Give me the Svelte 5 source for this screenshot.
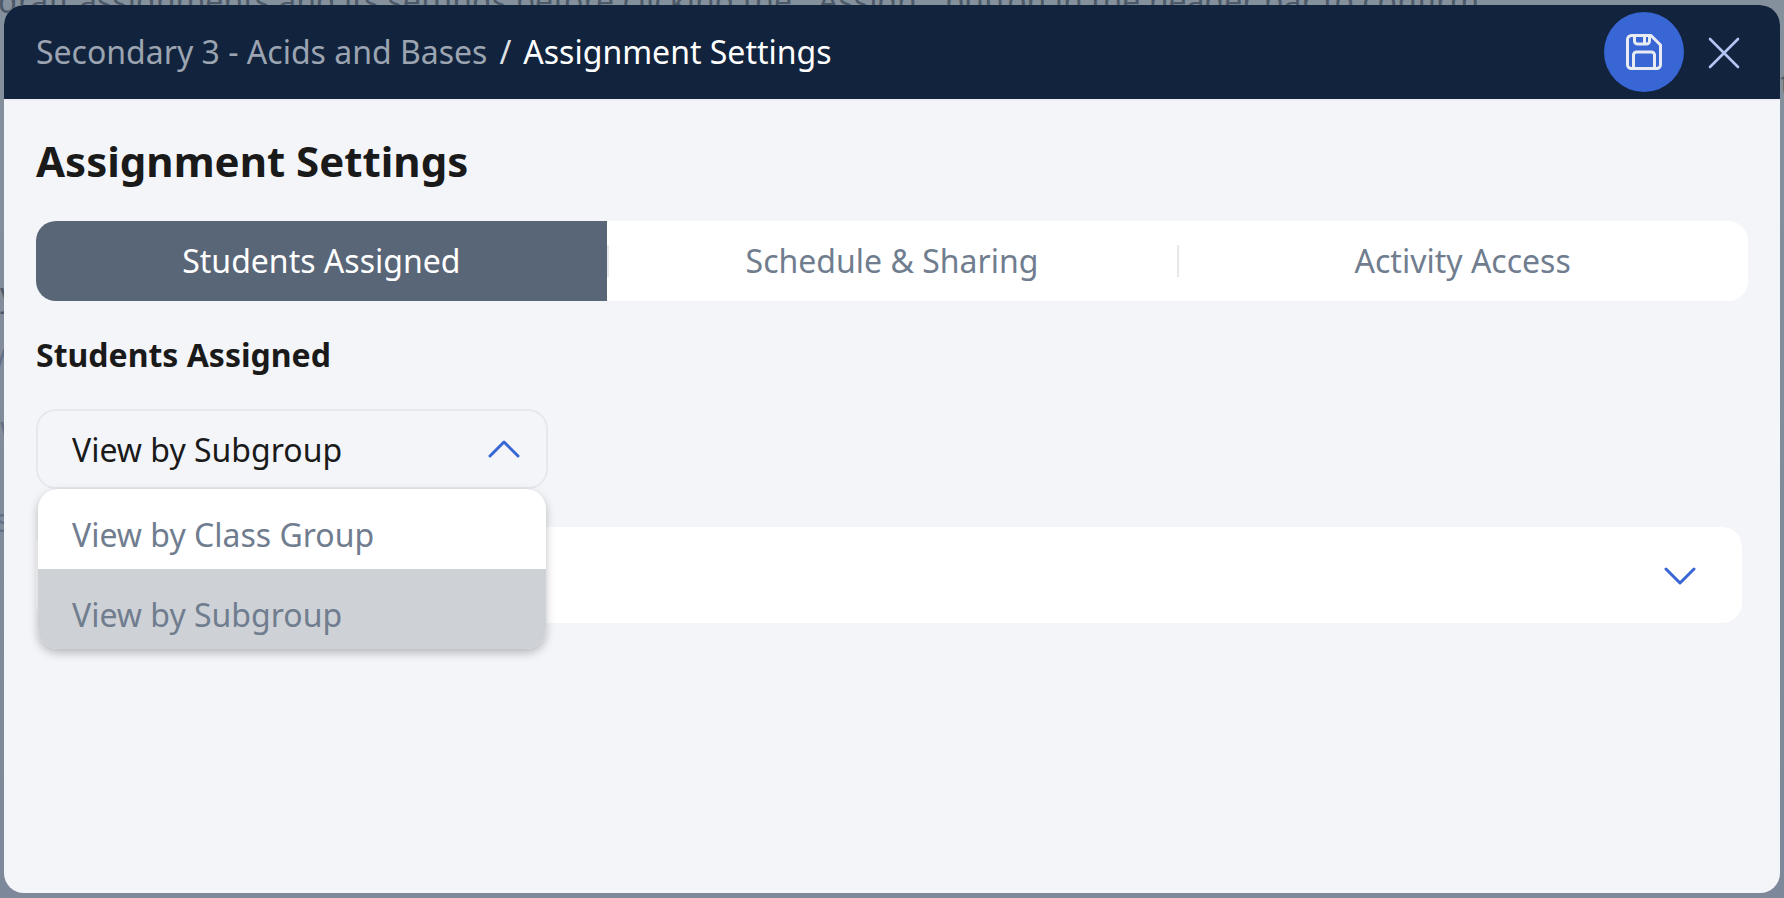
<script>
  const tabs = ['Students Assigned', 'Schedule & Sharing', 'Activity Access'];
  const views = ['View by Class Group', 'View by Subgroup'];

  let activeTab = $state(tabs[0]);
  let view = $state(views[1]);
  let menuOpen = $state(true);
  let panelOpen = $state(false);

  function toggleMenu(event) {
    event.preventDefault();
    menuOpen = !menuOpen;
  }

  function choose(name) {
    view = name;
    menuOpen = false;
  }
</script>

<div class="page">
  <div class="behind" aria-hidden="true">
    <p class="notice">
      draft assignments and its settings before clicking the&nbsp; “Assign”&nbsp; button in the header bar to confirm
    </p>
    <span class="edge heading">y</span>
    <span class="edge first">v</span>
    <span class="edge second">w</span>
    <span class="edge third">s</span>
    <span class="edge far">t</span>
  </div>

  <div class="dialog" role="dialog" aria-labelledby="dialog-title">
    <header class="bar">
      <nav class="crumbs" aria-label="Breadcrumb">
        <a href="#assignment">Secondary 3 - Acids and Bases</a>
        <span class="slash">/</span>
        <span class="here">Assignment Settings</span>
      </nav>
      <div class="actions">
        <button class="save" type="button" aria-label="Save">
          <svg width="36" height="36" viewBox="0 0 36 36" fill="none" stroke="#e9ebf3" stroke-width="3" stroke-linejoin="round">
            <path d="M5.5 1.5H25L34.500 11V30.500a4 4 0 0 1-4 4h-25a4 4 0 0 1-4-4v-25a4 4 0 0 1 4-4z" />
            <path d="M8.500 1.500v5.500a3 3 0 0 0 3 3h9a3 3 0 0 0 3-3V1.500" />
            <path d="M18.500 1.500v8" />
            <path d="M7.500 34.500V21a3 3 0 0 1 3-3h15a3 3 0 0 1 3 3v13.500" />
          </svg>
        </button>
        <button class="close" type="button" aria-label="Close">
          <svg width="32" height="32" viewBox="0 0 32 32" fill="none" stroke="#b3c5f2" stroke-width="2.600" stroke-linecap="round">
            <path d="M2 2l28 28M30 2L2 30" />
          </svg>
        </button>
      </div>
    </header>

    <main class="body">
      <h1 id="dialog-title">Assignment Settings</h1>

      <div class="tabs" role="tablist">
        {#each tabs as tab}
          <button
            type="button"
            role="tab"
            class="tab"
            class:active={tab === activeTab}
            aria-selected={tab === activeTab}
            onclick={() => (activeTab = tab)}>{tab}</button>
        {/each}
      </div>

      <h2 id="view-label">Students Assigned</h2>

      <div class="picker">
        <select aria-labelledby="view-label" bind:value={view} onmousedown={toggleMenu}>
          {#each views as name}
            <option value={name}>{name}</option>
          {/each}
        </select>
        <svg class="chevron" class:flip={!menuOpen} width="32" height="20" viewBox="0 0 32 20" aria-hidden="true">
          <path d="M2 17L16 3l14 14" />
        </svg>
        {#if menuOpen}
          <div class="menu">
            {#each views as name}
              <button type="button" class:current={name === view} onclick={() => choose(name)}>{name}</button>
            {/each}
          </div>
        {/if}
      </div>

      <button
        class="panel"
        type="button"
        aria-label="Subgroup"
        aria-expanded={panelOpen}
        onclick={() => (panelOpen = !panelOpen)}>
        <svg class="chevron" class:flip={panelOpen} width="32" height="20" viewBox="0 0 32 20" aria-hidden="true">
          <path d="M2 3l14 14L30 3" />
        </svg>
      </button>
    </main>
  </div>
</div>

<style>
  :global(body) {
    margin: 0;
  }

  .page,
  .page * {
    box-sizing: border-box;
  }

  .page {
    position: relative;
    display: flex;
    min-height: 100vh;
    padding: 5px 4px;
    overflow: hidden;
    background: linear-gradient(#84909c, #7d889a);
    color: #1a1a1a;
    font-family: 'Noto Sans', sans-serif;
    font-size: 32px;
    line-height: 44px;
  }

  button,
  select {
    margin: 0;
    border: 0;
    background: none;
    color: inherit;
    font: inherit;
    cursor: pointer;
  }

  /* Page text that runs on beneath the dialog */
  .behind {
    position: absolute;
    inset: 0;
    overflow: hidden;
    color: #4c5968;
    white-space: nowrap;
  }

  .notice {
    position: absolute;
    top: -21px;
    left: -2px;
    margin: 0;
  }

  .edge {
    position: absolute;
    left: 0;
    color: #637086;
  }

  .heading {
    top: 272px;
    color: #4c5968;
  }

  .first {
    top: 333px;
    left: -10px;
  }

  .second {
    top: 406px;
  }

  .third {
    top: 498px;
    left: -5px;
  }

  .far {
    top: 61px;
    right: -8px;
    left: auto;
    color: #4c5968;
  }

  .dialog {
    position: relative;
    display: flex;
    flex: 1;
    flex-direction: column;
    min-width: 0;
    overflow: hidden;
    border-radius: 20px;
    background: #f3f5f9;
  }

  .bar {
    display: flex;
    align-items: center;
    justify-content: space-between;
    padding: 7px 32px;
    border-bottom: 2px solid #efedf5;
    background: #12233d;
  }

  .crumbs {
    display: flex;
    gap: 12px;
  }

  .crumbs a {
    color: #9ba4b0;
    text-decoration: none;
  }

  .slash {
    color: #dfe1e5;
  }

  .here {
    color: #fff;
  }

  .actions {
    display: flex;
    align-items: center;
    gap: 16px;
  }

  .save,
  .close {
    display: grid;
    place-items: center;
    height: 80px;
    padding: 0;
  }

  .save {
    width: 80px;
    border-radius: 50%;
    background: #3866d4;
  }

  .close {
    width: 48px;
    padding-top: 2px;
  }

  .body {
    flex: 1;
    padding: 32px;
  }

  h1,
  h2 {
    margin: 0;
    font-weight: 700;
  }

  h1 {
    font-size: 42px;
    line-height: 56px;
  }

  h2 {
    font-size: 32px;
    line-height: 44px;
  }

  .tabs {
    display: grid;
    grid-template-columns: repeat(3, 1fr);
    margin: 32px 0;
    overflow: hidden;
    border-radius: 20px;
    background: #fff;
  }

  .tab {
    position: relative;
    height: 80px;
    padding: 0;
    color: #707d8f;
  }

  .tab + .tab::before {
    position: absolute;
    top: 24px;
    left: 0;
    width: 2px;
    height: 32px;
    background: #e7e8eb;
    content: '';
  }

  .tab.active {
    background: #596678;
    color: #fff;
  }

  .picker {
    position: relative;
    width: 30%;
    min-width: 400px;
    max-width: 512px;
    margin-top: 32px;
  }

  select {
    display: block;
    width: 100%;
    height: 80px;
    padding: 2px 80px 0 34px;
    border: 2px solid #e7e8ec;
    border-radius: 20px;
    appearance: none;
  }

  .chevron {
    fill: none;
    stroke: #3866d4;
    stroke-width: 3;
    stroke-linecap: round;
    stroke-linejoin: round;
  }

  .chevron.flip {
    transform: rotate(180deg);
  }

  .picker .chevron {
    position: absolute;
    top: 30px;
    right: 28px;
    pointer-events: none;
  }

  .menu {
    position: absolute;
    z-index: 1;
    top: 80px;
    right: 2px;
    left: 2px;
    overflow: hidden;
    border-radius: 20px;
    background: #fff;
    box-shadow: 0 4px 10px rgba(0, 0, 0, 0.25);
  }

  .menu button {
    display: block;
    width: 100%;
    height: 80px;
    padding: 12px 34px 0;
    color: #707d8f;
    text-align: left;
  }

  .menu .current {
    background: #ced1d6;
  }

  .panel {
    display: flex;
    align-items: center;
    justify-content: flex-end;
    width: calc(100% - 6px);
    height: 96px;
    margin-top: 38px;
    padding: 2px 46px 0;
    border-radius: 20px;
    background: #fff;
  }
</style>
